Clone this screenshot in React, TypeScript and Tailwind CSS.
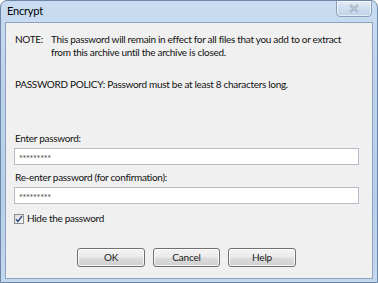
import React from "react";

function Btn({ label, w }: { label: string; w: string }) {
  return (
    <div
      className={`${w} h-[19px] rounded-[3px] border border-[#707070] bg-[linear-gradient(to_bottom,#f3f3f3_0%,#ebebeb_48%,#dddddd_52%,#cfcfcf_100%)] shadow-[inset_0_0_0_1px_rgba(255,255,255,0.8)] flex items-center justify-center text-[10px] tracking-[-0.2px] text-[#1a1a1a]`}
    >
      {label}
    </div>
  );
}

export default function App() {
  return (
    <div
      className="relative w-[378px] h-[283px] overflow-hidden rounded-t-[7px] border border-[#6d87a8] bg-[linear-gradient(to_bottom,#c9dcf1_0%,#bdd3ec_30%,#b7cfea_70%,#c4d8ee_100%)]"
      style={{ fontFamily: 'Lato, "Noto Sans", sans-serif' }}
    >
      {/* title bar */}
      <div className="h-[21px] flex items-center pl-[6px] text-[11px] tracking-[-0.2px] text-black">
        Encrypt
      </div>
      {/* close button */}
      <div className="absolute top-[-1px] right-[5px] w-[36px] h-[17px] rounded-b-[4px] border border-[#8aa1bd] bg-[linear-gradient(to_bottom,#e2ecf7_0%,#cfdff0_50%,#bed3ea_100%)] shadow-[inset_0_0_0_1px_rgba(255,255,255,0.6)] flex items-center justify-center">
        <svg width="10" height="9" viewBox="0 0 10 9">
          <path d="M1 1 L9 8 M9 1 L1 8" stroke="#8b98a8" strokeWidth="2.2" fill="none" />
          <path d="M1 1 L9 8 M9 1 L1 8" stroke="#f4f7fb" strokeWidth="0.8" fill="none" />
        </svg>
      </div>
      {/* content */}
      <div className="mx-[4px] h-[257px] border border-[#8ea3bd] bg-[#f0f0f0] text-[10px] tracking-[-0.3px] leading-[13px] text-[#111] flex flex-col">
        <div className="mt-[10px] ml-[9px] flex">
          <div className="w-[36px] shrink-0">NOTE:</div>
          <div className="w-[300px]">
            This password will remain in effect for all files that you add to or extract
            from this archive until the archive is closed.
          </div>
        </div>
        <div className="mt-[19px] ml-[9px]">
          PASSWORD POLICY: Password must be at least 8 characters long.
        </div>
        <div className="mt-[41px] ml-[9px]">Enter password:</div>
        <div className="mt-[3px] ml-[8px] w-[345px] h-[17px] bg-white border border-[#b5bcc7] pl-[4px] flex items-center text-[9px] text-[#444] tracking-[-0.3px]">
          <span className="translate-y-[2px]">*********</span>
        </div>
        <div className="mt-[6px] ml-[9px]">Re-enter password (for confirmation):</div>
        <div className="mt-[3px] ml-[8px] w-[345px] h-[17px] bg-white border border-[#b5bcc7] pl-[4px] flex items-center text-[9px] text-[#444] tracking-[-0.3px]">
          <span className="translate-y-[2px]">*********</span>
        </div>
        <div className="mt-[8px] ml-[8px] flex items-center">
          <div className="w-[10px] h-[10px] border border-[#8e8f8f] bg-[linear-gradient(to_bottom_right,#dcdcdc,#ffffff)] flex items-center justify-center">
            <svg width="8" height="8" viewBox="0 0 8 8">
              <path d="M1 4.2 L3 6.5 L7 1" stroke="#3b4f8a" strokeWidth="1.5" fill="none" />
            </svg>
          </div>
          <span className="ml-[3px]">Hide the password</span>
        </div>
        <div className="mt-[23px] ml-[71px] flex gap-[8px]">
          <Btn label="OK" w="w-[68px]" />
          <Btn label="Cancel" w="w-[67px]" />
          <Btn label="Help" w="w-[68px]" />
        </div>
      </div>
    </div>
  );
}
